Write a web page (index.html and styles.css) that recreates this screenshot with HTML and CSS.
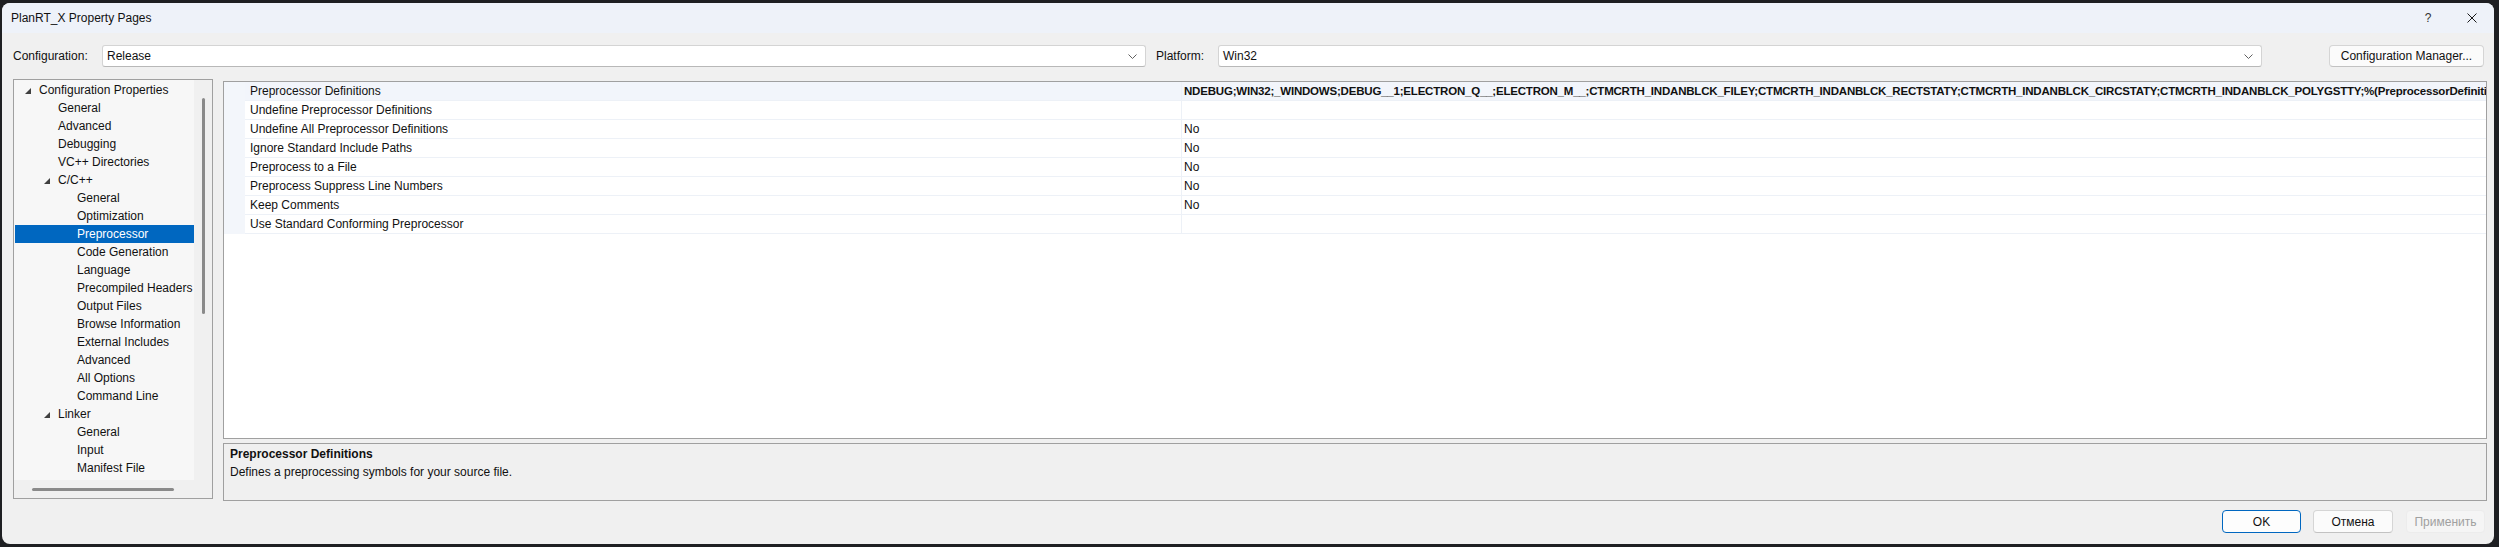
FILE: index.html
```html
<!DOCTYPE html>
<html>
<head>
<meta charset="utf-8">
<title>PlanRT_X Property Pages</title>
<link rel="stylesheet" href="styles.css">
</head>
<body>
<div class="window">
  <div class="titlebar">
    <span class="title">PlanRT_X Property Pages</span>
    <div class="caption">
      <div class="cap-btn help">?</div>
      <div class="cap-btn">
        <svg width="10" height="10" viewBox="0 0 10 10"><path d="M0.5 0.5 L9.5 9.5 M9.5 0.5 L0.5 9.5" stroke="#1a1a1a" stroke-width="1" fill="none"/></svg>
      </div>
    </div>
  </div>

  <div class="config-row">
    <label class="lbl lbl-config">Configuration:</label>
    <div class="combo">
      <span class="combo-text">Release</span>
      <svg class="chev" width="9" height="5" viewBox="0 0 9 5"><path d="M0.5 0.5 L4.5 4.5 L8.5 0.5" stroke="#606060" fill="none"/></svg>
    </div>
    <label class="lbl lbl-platform">Platform:</label>
    <div class="combo">
      <span class="combo-text">Win32</span>
      <svg class="chev" width="9" height="5" viewBox="0 0 9 5"><path d="M0.5 0.5 L4.5 4.5 L8.5 0.5" stroke="#606060" fill="none"/></svg>
    </div>
    <button class="btn btn-cm">Configuration Manager...</button>
  </div>

  <div class="main">
    <div class="tree-panel">
      <div class="tree-items">
        <div class="ti l0 tw"><span class="twisty"><svg width="6" height="6" viewBox="0 0 6 6"><polygon points="6,0 6,6 0,6" fill="#404040"/></svg></span>Configuration Properties</div>
        <div class="ti l1">General</div>
        <div class="ti l1">Advanced</div>
        <div class="ti l1">Debugging</div>
        <div class="ti l1">VC++ Directories</div>
        <div class="ti l1 tw"><span class="twisty"><svg width="6" height="6" viewBox="0 0 6 6"><polygon points="6,0 6,6 0,6" fill="#404040"/></svg></span>C/C++</div>
        <div class="ti l2">General</div>
        <div class="ti l2">Optimization</div>
        <div class="ti l2 selected">Preprocessor</div>
        <div class="ti l2">Code Generation</div>
        <div class="ti l2">Language</div>
        <div class="ti l2">Precompiled Headers</div>
        <div class="ti l2">Output Files</div>
        <div class="ti l2">Browse Information</div>
        <div class="ti l2">External Includes</div>
        <div class="ti l2">Advanced</div>
        <div class="ti l2">All Options</div>
        <div class="ti l2">Command Line</div>
        <div class="ti l1 tw"><span class="twisty"><svg width="6" height="6" viewBox="0 0 6 6"><polygon points="6,0 6,6 0,6" fill="#404040"/></svg></span>Linker</div>
        <div class="ti l2">General</div>
        <div class="ti l2">Input</div>
        <div class="ti l2">Manifest File</div>
      </div>
      <div class="vscroll"><div class="vthumb"></div></div>
      <div class="hscroll"><div class="hthumb"></div></div>
      <div class="corner"></div>
    </div>

    <div class="right-col">
      <div class="grid">
        <div class="prow current">
          <div class="gutter"></div>
          <div class="pname">Preprocessor Definitions</div>
          <div class="pval bold">NDEBUG;WIN32;_WINDOWS;DEBUG__1;ELECTRON_Q__;ELECTRON_M__;CTMCRTH_INDANBLCK_FILEY;CTMCRTH_INDANBLCK_RECTSTATY;CTMCRTH_INDANBLCK_CIRCSTATY;CTMCRTH_INDANBLCK_POLYGSTTY;%(PreprocessorDefinitions)</div>
        </div>
        <div class="prow">
          <div class="gutter"></div>
          <div class="pname">Undefine Preprocessor Definitions</div>
          <div class="pval"></div>
        </div>
        <div class="prow">
          <div class="gutter"></div>
          <div class="pname">Undefine All Preprocessor Definitions</div>
          <div class="pval">No</div>
        </div>
        <div class="prow">
          <div class="gutter"></div>
          <div class="pname">Ignore Standard Include Paths</div>
          <div class="pval">No</div>
        </div>
        <div class="prow">
          <div class="gutter"></div>
          <div class="pname">Preprocess to a File</div>
          <div class="pval">No</div>
        </div>
        <div class="prow">
          <div class="gutter"></div>
          <div class="pname">Preprocess Suppress Line Numbers</div>
          <div class="pval">No</div>
        </div>
        <div class="prow">
          <div class="gutter"></div>
          <div class="pname">Keep Comments</div>
          <div class="pval">No</div>
        </div>
        <div class="prow">
          <div class="gutter"></div>
          <div class="pname">Use Standard Conforming Preprocessor</div>
          <div class="pval"></div>
        </div>
      </div>
      <div class="desc">
        <div class="desc-title">Preprocessor Definitions</div>
        <div class="desc-text">Defines a preprocessing symbols for your source file.</div>
      </div>
    </div>
  </div>

  <div class="buttons">
    <button class="btn btn-ok">OK</button>
    <button class="btn btn-cancel">Отмена</button>
    <button class="btn btn-apply">Применить</button>
  </div>
</div>
</body>
</html>
```

FILE: styles.css
```css
* { box-sizing: border-box; }
html, body { margin: 0; padding: 0; }
body {
  width: 2499px;
  height: 547px;
  overflow: hidden;
  background: #1e1f22;
  font-family: "Liberation Sans", Arial, sans-serif;
  font-size: 12px;
  color: #111111;
}
.window {
  margin: 3px 0 0 2px;
  width: 2492px;
  height: 541px;
  background: #f0f0f0;
  border-radius: 8px;
  display: flex;
  flex-direction: column;
  overflow: hidden;
}
.titlebar {
  height: 30px;
  flex: none;
  background: #eef2f9;
  display: flex;
  align-items: center;
  padding-left: 9px;
}
.title { font-size: 12px; color: #111111; }
.caption { margin-left: auto; display: flex; }
.cap-btn {
  width: 44px;
  height: 30px;
  display: flex;
  align-items: center;
  justify-content: center;
}
.help { font-size: 12px; color: #333; }

.config-row {
  flex: none;
  display: flex;
  align-items: center;
  height: 22px;
  margin-top: 12px;
  padding-left: 11px;
}
.lbl { display: block; }
.lbl-config { width: 89px; }
.lbl-platform { width: 62px; margin-left: 10px; }
.combo {
  width: 1044px;
  height: 22px;
  background: #ffffff;
  border: 1px solid #d4d4d4;
  border-bottom-color: #b8b8b8;
  border-radius: 3px;
  display: flex;
  align-items: center;
  padding: 0 8px 0 4px;
}
.combo-text { flex: 1; }
.chev { flex: none; }
.btn {
  font-family: "Liberation Sans", Arial, sans-serif;
  font-size: 12px;
  color: #111111;
  background: #fbfbfb;
  border: 1px solid #d5d5d5;
  border-bottom-color: #c2c2c2;
  border-radius: 4px;
  padding: 0;
  height: 23px;
}
.btn-cm { width: 155px; height: 22px; margin-left: 67px; }

.main {
  flex: none;
  display: flex;
  height: 422px;
  margin-top: 12px;
  padding-left: 11px;
  padding-right: 7px;
}
.tree-panel {
  width: 200px;
  height: 420px;
  border: 1px solid #a0a0a0;
  display: grid;
  grid-template-columns: 180px 18px;
  grid-template-rows: 400px 18px;
  background: #f0f0f0;
}
.tree-items {
  background: #f7f7f7;
  overflow: hidden;
  padding: 1px 0 0 1px;
}
.ti {
  height: 18px;
  display: flex;
  align-items: center;
  white-space: nowrap;
}
.ti.l0 { padding-left: 24px; }
.ti.l1 { padding-left: 43px; }
.ti.l2 { padding-left: 62px; }
.ti.l0.tw { padding-left: 10px; }
.ti.l1.tw { padding-left: 29px; }
.twisty {
  width: 14px;
  display: flex;
  align-items: center;
  padding-top: 2px;
}
.twisty svg { display: block; }
.ti.selected { background: #0067c0; color: #ffffff; }
.vscroll { background: #f0f0f0; padding: 18px 0 0 8px; }
.vthumb { width: 3px; height: 216px; background: #8a8a8a; border-radius: 2px; }
.hscroll { background: #f0f0f0; padding: 8px 0 0 18px; }
.hthumb { width: 142px; height: 3px; background: #8a8a8a; border-radius: 2px; }
.corner { background: #f0f0f0; }

.right-col {
  flex: 1;
  margin-left: 10px;
  margin-top: 2px;
  display: flex;
  flex-direction: column;
  height: 420px;
  min-width: 0;
}
.grid {
  height: 358px;
  flex: none;
  background: #ffffff;
  border: 1px solid #a0a0a0;
  overflow: hidden;
}
.prow { display: flex; height: 19px; }
.gutter { width: 21px; flex: none; background: #f3f6fb; }
.pname {
  width: 936px;
  flex: none;
  padding-left: 5px;
  line-height: 18px;
  border-bottom: 1px solid #edf1f7;
  white-space: nowrap;
}
.pval {
  flex: 1;
  min-width: 0;
  border-left: 1px solid #edf1f7;
  border-bottom: 1px solid #edf1f7;
  padding-left: 2px;
  line-height: 18px;
  white-space: nowrap;
  overflow: hidden;
}
.pval.bold { font-weight: bold; font-size: 11.5px; letter-spacing: -0.2px; }
.prow.current { background: #f2f5fb; }

.desc {
  margin-top: 4px;
  height: 58px;
  flex: none;
  border: 1px solid #a0a0a0;
  padding: 1px 6px;
}
.desc-title { font-weight: bold; line-height: 18px; }
.desc-text { line-height: 18px; }

.buttons {
  flex: none;
  display: flex;
  justify-content: flex-end;
  margin-top: 9px;
  padding-right: 9px;
}
.btn-ok { width: 79px; border-color: #0067c0; background: #fdfdfd; }
.btn-cancel { width: 80px; margin-left: 12px; }
.btn-apply { width: 79px; margin-left: 13px; background: #f5f5f5; border-color: #ececec; color: #a0a0a0; }
```
